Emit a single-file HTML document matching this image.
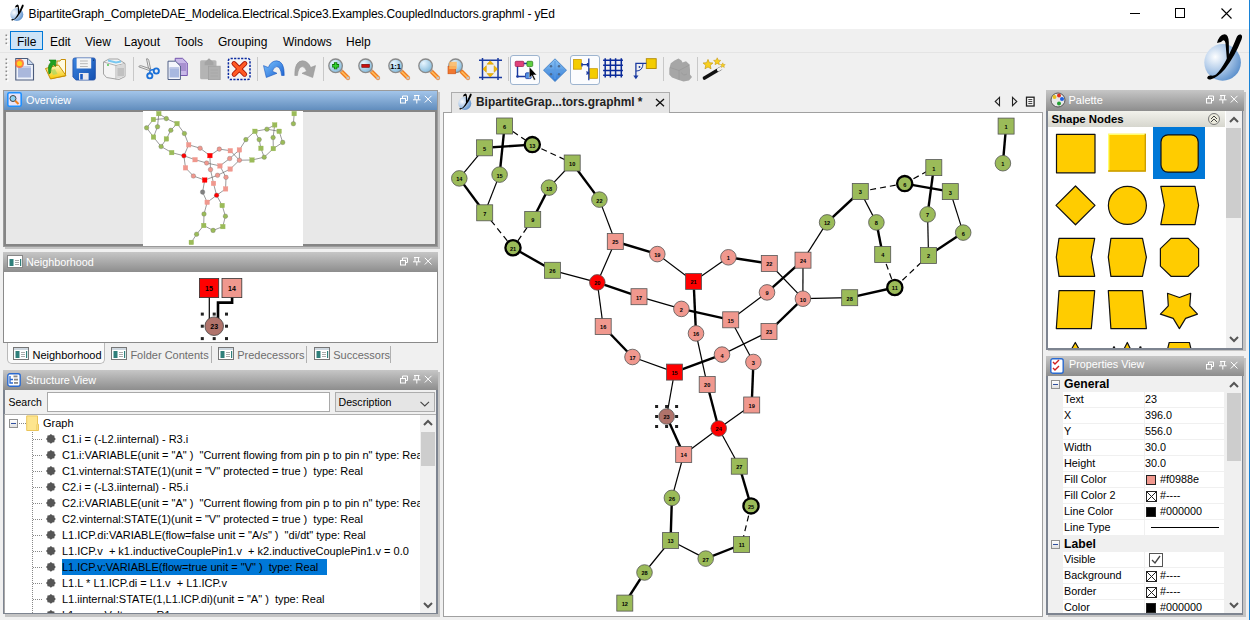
<!DOCTYPE html>
<html><head><meta charset="utf-8">
<style>
*{margin:0;padding:0;box-sizing:border-box}
html,body{width:1250px;height:620px;overflow:hidden;background:#f0f0f0;font-family:"Liberation Sans",sans-serif;font-size:12px;color:#000}
.a{position:absolute}
.t{position:absolute;white-space:nowrap;line-height:1}
.hdrA{background:linear-gradient(#a3c5ea,#618dbd)}
.hdrI{background:linear-gradient(#c6c6c6,#8d8d8d)}
.ptitle{color:#fff;font-size:10.8px}
.tab{font-size:11px}
.tree .t{font-size:11px}
.props .t{font-size:10.8px}
</style></head><body>
<svg class="a" width="0" height="0" style="left:0;top:0"><defs><radialGradient id="lg" cx="0.3" cy="0.35" r="0.8"><stop offset="0" stop-color="#fdfeff"/><stop offset="0.45" stop-color="#b4cdea"/><stop offset="1" stop-color="#5088c8"/></radialGradient></defs></svg>
<!-- title bar -->
<div class="a" style="left:0;top:0;width:1249px;height:29px;background:#fff"></div>
<div class="a" style="left:1249px;top:0;width:1px;height:620px;background:#1883d7"></div>
<svg class="a" style="left:6.5px;top:3.4px" width="18.8" height="21.3" viewBox="0 0 53 60">
<circle cx="27.6" cy="32.4" r="18.3" fill="url(#lg)"/>
<path d="M22 13 Q24 5 29.5 4.2 Q33.5 4.5 33.8 12 L34 30 L31 31 L30.5 13 Q29.5 8 26 12 Z" fill="#000"/>
<path d="M45.8 4.6 Q48 5.5 46.5 9.5 Q40 26 30 39 Q22 48 15.5 49.5 Q12 50 12.2 47.5 Q13 45 16 45.5 Q19 46 21 44.5 Q30 36 42 6.5 Q43.5 4 45.8 4.6 Z" fill="#000"/>
</svg>
<div class="t" style="left:28.6px;top:7.5px;font-size:12px;letter-spacing:-0.13px;color:#000">BipartiteGraph_CompleteDAE_Modelica.Electrical.Spice3.Examples.CoupledInductors.graphml - yEd</div>
<div class="a" style="left:1130px;top:13px;width:10px;height:1px;background:#000"></div>
<div class="a" style="left:1175px;top:8px;width:10px;height:10px;border:1px solid #000"></div>
<svg class="a" style="left:1221px;top:8px" width="11" height="11"><path d="M0.5 0.5L10.5 10.5M10.5 0.5L0.5 10.5" stroke="#000" stroke-width="1.1"/></svg>

<!-- menu bar -->
<svg class="a" style="left:5px;top:34px" width="4" height="12"><g fill="#fff"><rect x="1.5" y="1.5" width="2" height="2"/><rect x="1.5" y="5.5" width="2" height="2"/><rect x="1.5" y="9.5" width="2" height="2"/></g><g fill="#8a8a8a"><rect x="0.5" y="0.5" width="1.6" height="1.6"/><rect x="0.5" y="4.5" width="1.6" height="1.6"/><rect x="0.5" y="8.5" width="1.6" height="1.6"/></g></svg>
<div class="a" style="left:0;top:52px;width:1249px;height:1px;background:#e4e4e4"></div>
<div class="a" style="left:10px;top:31px;width:33px;height:19px;background:#cce4f7;border:1px solid #0078d7"></div>
<div class="t" style="left:17px;top:36px">File</div>
<div class="t" style="left:50px;top:36px">Edit</div>
<div class="t" style="left:85px;top:36px">View</div>
<div class="t" style="left:124px;top:36px">Layout</div>
<div class="t" style="left:175px;top:36px">Tools</div>
<div class="t" style="left:218px;top:36px">Grouping</div>
<div class="t" style="left:283px;top:36px">Windows</div>
<div class="t" style="left:346px;top:36px">Help</div>

<!-- toolbar -->
<svg class="a" style="left:5px;top:58px" width="4" height="24"><g fill="#fff"><rect x="1.5" y="1.5" width="2" height="2"/><rect x="1.5" y="5.5" width="2" height="2"/><rect x="1.5" y="9.5" width="2" height="2"/><rect x="1.5" y="13.5" width="2" height="2"/><rect x="1.5" y="17.5" width="2" height="2"/><rect x="1.5" y="21.5" width="2" height="2"/></g><g fill="#8a8a8a"><rect x="0.5" y="0.5" width="1.6" height="1.6"/><rect x="0.5" y="4.5" width="1.6" height="1.6"/><rect x="0.5" y="8.5" width="1.6" height="1.6"/><rect x="0.5" y="12.5" width="1.6" height="1.6"/><rect x="0.5" y="16.5" width="1.6" height="1.6"/><rect x="0.5" y="20.5" width="1.6" height="1.6"/></g></svg>
<svg class="a" style="left:12px;top:57px" width="26" height="26"><path d="M3.8 1.5H15.5L21.5 7.5V23H3.8Z" fill="#eef2fa" stroke="#4a5a7a" stroke-width="1.1"/><path d="M15.5 1.5V7.5H21.5" fill="#c8d8f0" stroke="#4a5a7a" stroke-width="0.8"/><rect x="6" y="9" width="13" height="11.5" fill="#aab8dc"/><rect x="6" y="9" width="13" height="2" fill="#c8d0e8"/><circle cx="7.5" cy="6.5" r="4.5" fill="#ff6a2a" opacity="0.85"/><circle cx="7.5" cy="6.5" r="2.6" fill="#ffd21a"/></svg>
<svg class="a" style="left:42px;top:57px" width="26" height="26"><defs><linearGradient id="fg" x1="0" y1="0" x2="0" y2="1"><stop offset="0" stop-color="#fff6c0"/><stop offset="1" stop-color="#f6c800"/></linearGradient></defs><path d="M15 4H18L19 2.5H23.5V19L9 21.5L7 8H15Z" fill="#fffbe0" stroke="#c8900a" stroke-width="1"/><path d="M3.5 11.5L16.5 8L24 18.5L8.5 22Z" fill="url(#fg)" stroke="#c8900a" stroke-width="1"/><path d="M9 13L13 12L15.5 17L11 18Z" fill="#a8d860" opacity="0.7"/><path d="M7 17Q5 9 9 5L7 3H14L13.5 9.5L11.5 7.5Q8.5 10 8.5 16Z" fill="#20a020" stroke="#108010" stroke-width="0.6"/></svg>
<svg class="a" style="left:72px;top:57px" width="26" height="26"><defs><linearGradient id="sg" x1="0" y1="0" x2="1" y2="1"><stop offset="0" stop-color="#3a84e0"/><stop offset="1" stop-color="#1450b0"/></linearGradient></defs><path d="M3 0.9H21.4Q23.4 0.9 23.4 3V21Q23.4 23.1 21.4 23.1H4L0.9 20V3Q0.9 0.9 3 0.9Z" fill="url(#sg)" stroke="#1a48a0" stroke-width="0.7"/><rect x="4.6" y="1.2" width="14.6" height="10.3" fill="#f4f4f4"/><path d="M8 4H15.8M8 6.7H15.8M8 9.5H15.8" stroke="#b8b8b8" stroke-width="1"/><rect x="7" y="16" width="9.6" height="6.8" fill="#e8e8ee"/><rect x="8.2" y="17" width="2.6" height="5.5" fill="#1a58c0"/><circle cx="21.5" cy="3.2" r="0.6" fill="#0a2a60"/></svg>
<svg class="a" style="left:102px;top:57px" width="26" height="26"><path d="M1.5 5L7 2H16L23 6.5V19.5L17 22.5L4.5 20.5L1.5 17Z" fill="#f4f4f4" stroke="#9a9a9a" stroke-width="0.9"/><path d="M1.5 5L14 8.5L23 6.5M14 8.5V22.5" stroke="#a8a8a8" fill="none" stroke-width="0.9"/><path d="M14.5 9L22.5 7V19.5L14.5 22Z" fill="#d8d8d8"/><path d="M15.5 12H22M15.5 14H22M15.5 16H22M15.5 18H22" stroke="#999" stroke-width="0.7"/><path d="M6 3.5L14 5.5L19 4.5" stroke="#7ac8f0" stroke-width="2" fill="none"/><circle cx="6" cy="8" r="0.9" fill="#40c040"/></svg>
<div class="a" style="left:133px;top:57px;width:1px;height:24px;background:#c8c8c8"></div>
<svg class="a" style="left:137px;top:57px" width="26" height="26"><path d="M9.5 1.8Q11.3 1.2 11.8 3.5L13.6 12L11.8 12.8Z" fill="#f4f4f4" stroke="#7a7a7a" stroke-width="0.8"/><path d="M1.8 9.8Q2 8.3 4.3 8.8L13 11.8L12.3 13.5Z" fill="#f4f4f4" stroke="#7a7a7a" stroke-width="0.8"/><circle cx="19.3" cy="14" r="2.6" fill="none" stroke="#1a70d8" stroke-width="1.9"/><circle cx="12.8" cy="18.8" r="2.6" fill="none" stroke="#1a70d8" stroke-width="1.9"/><path d="M13 13.2L17 12.6M13 13.2L12.8 16" stroke="#1a70d8" stroke-width="1.5"/></svg>
<svg class="a" style="left:167px;top:57px" width="26" height="26"><path d="M8.2 1.3H15.5L20.3 6V18.5H8.2Z" fill="#c8b8e8" stroke="#6a4aa8" stroke-width="0.9"/><rect x="10" y="6" width="9" height="8" fill="#a890d0"/><path d="M1 4.2H8.5L13.4 9V22.5H1Z" fill="#f4f6fc" stroke="#40507a" stroke-width="0.9"/><rect x="2.5" y="11" width="9.5" height="9.5" fill="#a8b8e0"/><rect x="2.5" y="10" width="9.5" height="1.8" fill="#c0cae8"/></svg>
<svg class="a" style="left:198px;top:57px" width="26" height="26"><rect x="2.1" y="3.2" width="16.4" height="19" rx="1.5" fill="#b4b4b4"/><path d="M6.7 8.2H15.4V5.2L11 1.2L6.7 5.2Z" fill="#a4a4a4"/><rect x="10.5" y="9.2" width="11.7" height="13.4" fill="#b0b0b0" stroke="#a0a0a0" stroke-width="0.8"/><path d="M12.5 13H20M12.5 16H20M12.5 19H20" stroke="#a8a8a8" stroke-width="0.7"/></svg>
<svg class="a" style="left:227px;top:57px" width="26" height="26"><rect x="1.4" y="1.4" width="21.6" height="21.2" rx="2.2" fill="#f4f4f4" stroke="#0a2aa0" stroke-width="1.5" stroke-dasharray="2.2,1.3"/><path d="M7 6.6L17.6 17.2M17.8 6.6L7.2 17.2" stroke="#a01000" stroke-width="5" stroke-linecap="round"/><path d="M7 6.6L17.6 17.2M17.8 6.6L7.2 17.2" stroke="#ff5a24" stroke-width="3.4" stroke-linecap="round"/></svg>
<div class="a" style="left:257px;top:57px;width:1px;height:24px;background:#c8c8c8"></div>
<svg class="a" style="left:262px;top:57px" width="26" height="26"><defs><linearGradient id="ug" x1="0" y1="0" x2="1" y2="1"><stop offset="0" stop-color="#7cc4ff"/><stop offset="1" stop-color="#1a60d0"/></linearGradient></defs><path d="M22.2 18.5Q22.5 4 14.5 3.8Q9 4 6.3 10.5L1.5 8.6L4.3 20.5L15 16.3L10.3 14.3Q12 9.6 14.8 9.6Q18.6 9.8 19.6 18.5Z" fill="url(#ug)" stroke="#1a58c0" stroke-width="0.6"/></svg>
<svg class="a" style="left:292px;top:57px" width="26" height="26"><g transform="translate(25,0) scale(-1,1)"><path d="M22.2 18.5Q22.5 4 14.5 3.8Q9 4 6.3 10.5L1.5 8.6L4.3 20.5L15 16.3L10.3 14.3Q12 9.6 14.8 9.6Q18.6 9.8 19.6 18.5Z" fill="#a4a4a4" stroke="#959595" stroke-width="0.6"/></g></svg>
<div class="a" style="left:323px;top:57px;width:1px;height:24px;background:#c8c8c8"></div>
<svg class="a" style="left:327px;top:57px" width="26" height="26"><defs><radialGradient id="mg339" cx="0.35" cy="0.3" r="0.8"><stop offset="0" stop-color="#e8f6ff"/><stop offset="1" stop-color="#7ab4d8"/></radialGradient></defs><path d="M14.5 14.5L21 21" stroke="#f07a20" stroke-width="4.2" stroke-linecap="round"/><path d="M15 15L20.5 20.5" stroke="#ffc060" stroke-width="1.6" stroke-linecap="round"/><circle cx="21" cy="21" r="1.6" fill="#c8c8c8"/><path d="M12.5 12.5L14.5 14.5" stroke="#b0b0b0" stroke-width="3.5"/><circle cx="8.6" cy="8.8" r="6.8" fill="url(#mg339)" stroke="#8a8a8a" stroke-width="1.3"/><path d="M8.6 5.3V12.3M5.1 8.8H12.1" stroke="#0a6a0a" stroke-width="3.4"/><path d="M8.6 5.8V11.8M5.6 8.8H11.6" stroke="#30d030" stroke-width="1.8"/></svg>
<svg class="a" style="left:357px;top:57px" width="26" height="26"><defs><radialGradient id="mg369" cx="0.35" cy="0.3" r="0.8"><stop offset="0" stop-color="#e8f6ff"/><stop offset="1" stop-color="#7ab4d8"/></radialGradient></defs><path d="M14.5 14.5L21 21" stroke="#f07a20" stroke-width="4.2" stroke-linecap="round"/><path d="M15 15L20.5 20.5" stroke="#ffc060" stroke-width="1.6" stroke-linecap="round"/><circle cx="21" cy="21" r="1.6" fill="#c8c8c8"/><path d="M12.5 12.5L14.5 14.5" stroke="#b0b0b0" stroke-width="3.5"/><circle cx="8.6" cy="8.8" r="6.8" fill="url(#mg369)" stroke="#8a8a8a" stroke-width="1.3"/><rect x="4.8" y="7.3" width="7.6" height="3" fill="#c81010" stroke="#700000" stroke-width="0.6"/></svg>
<svg class="a" style="left:387px;top:57px" width="26" height="26"><defs><radialGradient id="mg399" cx="0.35" cy="0.3" r="0.8"><stop offset="0" stop-color="#e8f6ff"/><stop offset="1" stop-color="#7ab4d8"/></radialGradient></defs><path d="M14.5 14.5L21 21" stroke="#f07a20" stroke-width="4.2" stroke-linecap="round"/><path d="M15 15L20.5 20.5" stroke="#ffc060" stroke-width="1.6" stroke-linecap="round"/><circle cx="21" cy="21" r="1.6" fill="#c8c8c8"/><path d="M12.5 12.5L14.5 14.5" stroke="#b0b0b0" stroke-width="3.5"/><circle cx="8.6" cy="8.8" r="6.8" fill="url(#mg399)" stroke="#8a8a8a" stroke-width="1.3"/><text x="8.6" y="11.6" font-size="7.5" font-weight="bold" text-anchor="middle" fill="#000" font-family="Liberation Sans">1:1</text></svg>
<svg class="a" style="left:417px;top:57px" width="26" height="26"><defs><radialGradient id="mg429" cx="0.35" cy="0.3" r="0.8"><stop offset="0" stop-color="#e8f6ff"/><stop offset="1" stop-color="#7ab4d8"/></radialGradient></defs><path d="M14.5 14.5L21 21" stroke="#f07a20" stroke-width="4.2" stroke-linecap="round"/><path d="M15 15L20.5 20.5" stroke="#ffc060" stroke-width="1.6" stroke-linecap="round"/><circle cx="21" cy="21" r="1.6" fill="#c8c8c8"/><path d="M12.5 12.5L14.5 14.5" stroke="#b0b0b0" stroke-width="3.5"/><circle cx="8.6" cy="8.8" r="6.8" fill="url(#mg429)" stroke="#8a8a8a" stroke-width="1.3"/></svg>
<svg class="a" style="left:447px;top:57px" width="26" height="26"><defs><radialGradient id="mg459" cx="0.35" cy="0.3" r="0.8"><stop offset="0" stop-color="#e8f6ff"/><stop offset="1" stop-color="#7ab4d8"/></radialGradient></defs><path d="M14.5 14.5L21 21" stroke="#f07a20" stroke-width="4.2" stroke-linecap="round"/><path d="M15 15L20.5 20.5" stroke="#ffc060" stroke-width="1.6" stroke-linecap="round"/><circle cx="21" cy="21" r="1.6" fill="#c8c8c8"/><circle cx="8.6" cy="8.8" r="6.8" fill="url(#mg459)" stroke="#8a8a8a" stroke-width="1.3"/><rect x="1" y="9.6" width="7.6" height="7.2" fill="#f07830" stroke="#d05010" stroke-width="0.6"/><rect x="2.2" y="4.8" width="7.6" height="7.2" fill="#ffb860" opacity="0.85"/></svg>
<svg class="a" style="left:478px;top:57px" width="26" height="26"><path d="M4.5 1V23M20 1V23M1 3.2H24M1 20.5H24" stroke="#1a3aa0" stroke-width="1.5"/><path d="M12.2 3.8L15.5 7.2H9Z M12.2 20L15.5 16.6H9Z M4.8 12L8.3 8.7V15.3Z M19.6 12L16.1 8.7V15.3Z" fill="#f4b800" stroke="#c89000" stroke-width="0.5"/></svg>
<div class="a" style="left:508px;top:57px;width:1px;height:24px;background:#c8c8c8"></div>
<div class="a" style="left:510px;top:55px;width:30px;height:30px;border:1px solid #9db4cf;border-radius:3px;background:#fbfcfe"></div>
<svg class="a" style="left:513px;top:57px" width="26" height="26"><path d="M4.5 9V19.5H12M10.5 6.5H14.5" stroke="#1a3aa0" stroke-width="1.4" fill="none"/><circle cx="4.5" cy="19.5" r="1.3" fill="#1a3aa0"/><rect x="2.2" y="4.3" width="8.6" height="5.2" rx="1" fill="#e0407a" stroke="#a02050" stroke-width="0.8"/><rect x="13.9" y="4.3" width="5.8" height="5.2" rx="1" fill="#60d040" stroke="#308020" stroke-width="0.8"/><rect x="12.5" y="15.8" width="5.7" height="5.8" rx="1" fill="#5090e0" stroke="#1a3aa0" stroke-width="0.8"/><path d="M16.3 9.8V21L18.8 18.6L21 23.2L22.6 22.4L20.4 17.9H23.8Z" fill="#000" stroke="#fff" stroke-width="0.5"/></svg>
<svg class="a" style="left:543px;top:58px" width="24" height="24"><defs><linearGradient id="dg" x1="0" y1="0" x2="0" y2="1"><stop offset="0" stop-color="#8cc4f4"/><stop offset="1" stop-color="#2f7ad8"/></linearGradient></defs><path d="M12 0.8L23.5 12.2L12 23.5L0.5 12.2Z" fill="url(#dg)" stroke="#3a78c0" stroke-width="0.8"/><path d="M12 3V21M3 12.2H21" stroke="#5a9ae0" stroke-width="1.2"/><g fill="#4a6a90"><circle cx="8" cy="8.2" r="1.2"/><circle cx="16" cy="8.2" r="1.2"/><circle cx="8" cy="16.2" r="1.2"/><circle cx="16" cy="16.2" r="1.2"/></g></svg>
<div class="a" style="left:570px;top:55px;width:30px;height:30px;border:1px solid #9db4cf;border-radius:3px;background:#fbfcfe"></div>
<svg class="a" style="left:573px;top:57px" width="26" height="26"><rect x="0.5" y="2.6" width="7.8" height="9.6" fill="#f4cc00" stroke="#c89800" stroke-width="0.8"/><rect x="16.4" y="11.7" width="8" height="9.6" fill="#f4cc00" stroke="#c89800" stroke-width="0.8"/><path d="M15.8 1.6V23.2M8.3 7.7H15M9 6V9.4M14.5 6V9.4M13.5 14.5L16.5 17.5M16.5 14.5L13.5 17.5" stroke="#1a3aa0" stroke-width="1.3"/></svg>
<svg class="a" style="left:601px;top:57px" width="26" height="26"><path d="M4.2 1.2V20.4M9.4 1.2V20.4M14.6 1.2V20.4M20.3 1.2V20.4M2.1 3.2H21.9M2.1 8.2H21.9M2.1 13.4H21.9M2.1 18.3H21.9" stroke="#0a2a9a" stroke-width="1.5"/></svg>
<svg class="a" style="left:633px;top:57px" width="26" height="26"><rect x="13.3" y="1.7" width="9.9" height="9.8" fill="#f4cc00" stroke="#b08800" stroke-width="0.9"/><path d="M13.3 6.4H2.9V21" stroke="#1a3aa0" stroke-width="1.3" fill="none"/><path d="M0.3 18.5L2.9 22.3L5.5 18.5Z" fill="#1a3aa0"/><path d="M2.9 14.1Q10 14 10 6.4" stroke="#1a3aa0" stroke-width="1" fill="none"/><circle cx="6.5" cy="10" r="0.9" fill="#1a3aa0"/></svg>
<div class="a" style="left:663px;top:57px;width:1px;height:24px;background:#c8c8c8"></div>
<svg class="a" style="left:667px;top:57px" width="26" height="26"><path d="M2.3 11.5L3.8 6.2L7.5 3.5L11.5 1.6L14.5 3.6L15.5 5.5L19 4.2L22.5 7.5L23 12.5V17.5L25 20L22 23.5L16.5 24.5L11 22.8L5 20.5L2.3 17.5Z" fill="#a6a6a6"/><path d="M3 10.5L12 13.5L22.5 8M12 13.5V22.5M14.5 15.5Q16 19.5 20 17" stroke="#999" stroke-width="0.8" fill="none"/></svg>
<div class="a" style="left:697px;top:57px;width:1px;height:24px;background:#c8c8c8"></div>
<svg class="a" style="left:702px;top:57px" width="26" height="26"><path d="M2.5 21L18.5 11.5" stroke="#111" stroke-width="3.6" stroke-linecap="round"/><path d="M16.5 12.7L20.5 10.3" stroke="#f0f0f0" stroke-width="3.2" stroke-linecap="round"/><polygon points="6.00,2.40 7.41,5.66 10.95,5.99 8.28,8.34 9.06,11.81 6.00,10.00 2.94,11.81 3.72,8.34 1.05,5.99 4.59,5.66" fill="#f8d020" stroke="#c09000" stroke-width="0.6"/><polygon points="15.20,0.80 16.26,3.14 18.81,3.43 16.91,5.16 17.43,7.67 15.20,6.40 12.97,7.67 13.49,5.16 11.59,3.43 14.14,3.14" fill="#f8d020" stroke="#c09000" stroke-width="0.5"/><polygon points="20.80,5.80 21.51,7.43 23.27,7.60 21.94,8.77 22.33,10.50 20.80,9.60 19.27,10.50 19.66,8.77 18.33,7.60 20.09,7.43" fill="#f8d020" stroke="#c09000" stroke-width="0.4"/></svg>

<!-- Overview panel -->
<div class="a" style="left:5px;top:92px;width:435px;height:156.5px;background:#c4c4c4"></div>
<div class="a" style="left:3px;top:90px;width:435px;height:156.5px;background:#858585;border:1px solid #9a9a9a"></div>
<div class="a hdrA" style="left:4px;top:91px;width:433px;height:19px"></div>
<div class="t ptitle" style="left:26px;top:95px">Overview</div>
<svg class="a" style="left:400px;top:95px" width="34" height="9">
<g stroke="#fff" stroke-width="1" fill="none">
<rect x="0.5" y="3.5" width="5" height="4.5"/><path d="M2.5 3.5V1H7.5V5.5H5.5"/>
<path d="M14 0.5H19.5M15 0.5V4.5M18.5 0.5V4.5M13 4.8H20.5M16.8 4.8V8.5"/>
<path d="M24.8 0.8L31.5 7.5M31.5 0.8L24.8 7.5"/>
</g></svg>
<div class="a" style="left:6px;top:112px;width:429px;height:132px;background:#e8e8e8"></div>
<div class="a" style="left:143px;top:111px;width:160px;height:135px;background:#fff;overflow:hidden">
<svg width="160" height="135"><line x1="15.8" y1="2.6" x2="23.3" y2="7.6" stroke="#555" stroke-width="0.6"/>
<line x1="15.8" y1="2.6" x2="14.5" y2="15.7" stroke="#555" stroke-width="0.6"/>
<line x1="10.4" y1="8.5" x2="23.3" y2="7.6" stroke="#555" stroke-width="0.6"/>
<line x1="23.3" y1="7.6" x2="34.1" y2="12.6" stroke="#555" stroke-width="0.6"/>
<line x1="10.4" y1="8.5" x2="3.6" y2="16.8" stroke="#555" stroke-width="0.6"/>
<line x1="3.6" y1="16.8" x2="10.5" y2="26.1" stroke="#555" stroke-width="0.6"/>
<line x1="14.5" y1="15.7" x2="10.5" y2="26.1" stroke="#555" stroke-width="0.6"/>
<line x1="34.1" y1="12.6" x2="27.8" y2="19.3" stroke="#555" stroke-width="0.6"/>
<line x1="34.1" y1="12.6" x2="41.4" y2="22.5" stroke="#555" stroke-width="0.6"/>
<line x1="27.8" y1="19.3" x2="23.4" y2="27.9" stroke="#555" stroke-width="0.6"/>
<line x1="10.5" y1="26.1" x2="18.1" y2="35.5" stroke="#555" stroke-width="0.6"/>
<line x1="23.4" y1="27.9" x2="18.1" y2="35.5" stroke="#555" stroke-width="0.6"/>
<line x1="18.1" y1="35.5" x2="28.7" y2="41.6" stroke="#555" stroke-width="0.6"/>
<line x1="28.7" y1="41.6" x2="40.9" y2="44.8" stroke="#555" stroke-width="0.6"/>
<line x1="41.4" y1="22.5" x2="45.7" y2="33.8" stroke="#555" stroke-width="0.6"/>
<line x1="45.7" y1="33.8" x2="40.9" y2="44.8" stroke="#555" stroke-width="0.6"/>
<line x1="45.7" y1="33.8" x2="57.1" y2="37.2" stroke="#555" stroke-width="0.6"/>
<line x1="57.1" y1="37.2" x2="66.9" y2="44.6" stroke="#555" stroke-width="0.6"/>
<line x1="66.9" y1="44.6" x2="76.3" y2="38.1" stroke="#555" stroke-width="0.6"/>
<line x1="76.3" y1="38.1" x2="87.3" y2="39.7" stroke="#555" stroke-width="0.6"/>
<line x1="40.9" y1="44.8" x2="52.1" y2="48.7" stroke="#555" stroke-width="0.6"/>
<line x1="40.9" y1="44.8" x2="42.5" y2="56.8" stroke="#555" stroke-width="0.6"/>
<line x1="52.1" y1="48.7" x2="63.6" y2="52.0" stroke="#555" stroke-width="0.6"/>
<line x1="63.6" y1="52.0" x2="76.9" y2="54.9" stroke="#555" stroke-width="0.6"/>
<line x1="66.9" y1="44.6" x2="67.5" y2="58.6" stroke="#555" stroke-width="0.6"/>
<line x1="76.9" y1="54.9" x2="86.7" y2="47.5" stroke="#555" stroke-width="0.6"/>
<line x1="86.7" y1="47.5" x2="96.4" y2="38.9" stroke="#555" stroke-width="0.6"/>
<line x1="87.3" y1="39.7" x2="96.4" y2="49.2" stroke="#555" stroke-width="0.6"/>
<line x1="96.4" y1="38.9" x2="96.4" y2="49.2" stroke="#555" stroke-width="0.6"/>
<line x1="96.4" y1="38.9" x2="102.9" y2="28.6" stroke="#555" stroke-width="0.6"/>
<line x1="96.4" y1="49.2" x2="87.2" y2="58.1" stroke="#555" stroke-width="0.6"/>
<line x1="87.2" y1="58.1" x2="74.5" y2="64.3" stroke="#555" stroke-width="0.6"/>
<line x1="76.9" y1="54.9" x2="83.0" y2="66.3" stroke="#555" stroke-width="0.6"/>
<line x1="42.5" y1="56.8" x2="50.4" y2="65.0" stroke="#555" stroke-width="0.6"/>
<line x1="50.4" y1="65.0" x2="61.7" y2="69.1" stroke="#555" stroke-width="0.6"/>
<line x1="61.7" y1="69.1" x2="74.5" y2="64.3" stroke="#555" stroke-width="0.6"/>
<line x1="67.5" y1="58.6" x2="70.5" y2="72.4" stroke="#555" stroke-width="0.6"/>
<line x1="83.0" y1="66.3" x2="82.6" y2="77.9" stroke="#555" stroke-width="0.6"/>
<line x1="61.7" y1="69.1" x2="59.6" y2="81.1" stroke="#555" stroke-width="0.6"/>
<line x1="70.5" y1="72.4" x2="73.6" y2="84.3" stroke="#555" stroke-width="0.6"/>
<line x1="82.6" y1="77.9" x2="73.6" y2="84.3" stroke="#555" stroke-width="0.6"/>
<line x1="59.6" y1="81.1" x2="64.2" y2="91.3" stroke="#555" stroke-width="0.6"/>
<line x1="73.6" y1="84.3" x2="64.2" y2="91.3" stroke="#555" stroke-width="0.6"/>
<line x1="73.6" y1="84.3" x2="79.2" y2="94.5" stroke="#555" stroke-width="0.6"/>
<line x1="96.4" y1="49.2" x2="109.0" y2="49.0" stroke="#555" stroke-width="0.6"/>
<line x1="79.2" y1="94.5" x2="82.4" y2="105.2" stroke="#555" stroke-width="0.6"/>
<line x1="82.4" y1="105.2" x2="79.8" y2="115.6" stroke="#555" stroke-width="0.6"/>
<line x1="79.8" y1="115.6" x2="70.1" y2="119.4" stroke="#555" stroke-width="0.6"/>
<line x1="70.1" y1="119.4" x2="60.7" y2="114.5" stroke="#555" stroke-width="0.6"/>
<line x1="60.7" y1="114.5" x2="61.0" y2="103.0" stroke="#555" stroke-width="0.6"/>
<line x1="61.0" y1="103.0" x2="64.2" y2="91.3" stroke="#555" stroke-width="0.6"/>
<line x1="60.7" y1="114.5" x2="53.6" y2="123.2" stroke="#555" stroke-width="0.6"/>
<line x1="53.6" y1="123.2" x2="48.3" y2="131.4" stroke="#555" stroke-width="0.6"/>
<line x1="102.9" y1="28.6" x2="111.9" y2="20.3" stroke="#555" stroke-width="0.6"/>
<line x1="111.9" y1="20.3" x2="123.9" y2="18.2" stroke="#555" stroke-width="0.6"/>
<line x1="123.9" y1="18.2" x2="131.7" y2="13.9" stroke="#555" stroke-width="0.6"/>
<line x1="123.9" y1="18.2" x2="136.2" y2="20.3" stroke="#555" stroke-width="0.6"/>
<line x1="131.7" y1="13.9" x2="130.1" y2="26.5" stroke="#555" stroke-width="0.6"/>
<line x1="111.9" y1="20.3" x2="116.2" y2="28.6" stroke="#555" stroke-width="0.6"/>
<line x1="116.2" y1="28.6" x2="117.9" y2="37.3" stroke="#555" stroke-width="0.6"/>
<line x1="130.1" y1="26.5" x2="130.3" y2="37.6" stroke="#555" stroke-width="0.6"/>
<line x1="136.2" y1="20.3" x2="139.7" y2="31.4" stroke="#555" stroke-width="0.6"/>
<line x1="139.7" y1="31.4" x2="130.3" y2="37.6" stroke="#555" stroke-width="0.6"/>
<line x1="117.9" y1="37.3" x2="121.2" y2="46.2" stroke="#555" stroke-width="0.6"/>
<line x1="130.3" y1="37.6" x2="121.2" y2="46.2" stroke="#555" stroke-width="0.6"/>
<line x1="121.2" y1="46.2" x2="109.0" y2="49.0" stroke="#555" stroke-width="0.6"/>
<line x1="151.2" y1="2.6" x2="150.4" y2="12.7" stroke="#555" stroke-width="0.6"/>
<rect x="13.5" y="0.3" width="4.6" height="4.6" fill="#9bbb59" stroke="#9bbb59" stroke-width="0.3"/>
<rect x="8.1" y="6.2" width="4.6" height="4.6" fill="#9bbb59" stroke="#9bbb59" stroke-width="0.3"/>
<circle cx="23.3" cy="7.6" r="2.3" fill="#9bbb59" stroke="#666" stroke-width="0.3"/>
<rect x="31.8" y="10.3" width="4.6" height="4.6" fill="#9bbb59" stroke="#9bbb59" stroke-width="0.3"/>
<circle cx="3.6" cy="16.8" r="2.3" fill="#9bbb59" stroke="#666" stroke-width="0.3"/>
<circle cx="14.5" cy="15.7" r="2.3" fill="#9bbb59" stroke="#666" stroke-width="0.3"/>
<circle cx="27.8" cy="19.3" r="2.3" fill="#9bbb59" stroke="#666" stroke-width="0.3"/>
<circle cx="41.4" cy="22.5" r="2.3" fill="#9bbb59" stroke="#666" stroke-width="0.3"/>
<rect x="8.2" y="23.8" width="4.6" height="4.6" fill="#9bbb59" stroke="#9bbb59" stroke-width="0.3"/>
<rect x="21.1" y="25.6" width="4.6" height="4.6" fill="#9bbb59" stroke="#9bbb59" stroke-width="0.3"/>
<circle cx="18.1" cy="35.5" r="2.3" fill="#9bbb59" stroke="#666" stroke-width="0.3"/>
<rect x="26.4" y="39.3" width="4.6" height="4.6" fill="#9bbb59" stroke="#9bbb59" stroke-width="0.3"/>
<rect x="43.4" y="31.5" width="4.6" height="4.6" fill="#f0988e" stroke="#f0988e" stroke-width="0.3"/>
<circle cx="40.9" cy="44.8" r="2.3" fill="#ff0000" stroke="#666" stroke-width="0.3"/>
<rect x="40.2" y="54.5" width="4.6" height="4.6" fill="#f0988e" stroke="#f0988e" stroke-width="0.3"/>
<circle cx="57.1" cy="37.2" r="2.3" fill="#f0988e" stroke="#666" stroke-width="0.3"/>
<circle cx="76.3" cy="38.1" r="2.3" fill="#f0988e" stroke="#666" stroke-width="0.3"/>
<rect x="85.0" y="37.4" width="4.6" height="4.6" fill="#f0988e" stroke="#f0988e" stroke-width="0.3"/>
<rect x="64.6" y="42.3" width="4.6" height="4.6" fill="#ff0000" stroke="#ff0000" stroke-width="0.3"/>
<rect x="49.8" y="46.4" width="4.6" height="4.6" fill="#f0988e" stroke="#f0988e" stroke-width="0.3"/>
<circle cx="63.6" cy="52.0" r="2.3" fill="#f0988e" stroke="#666" stroke-width="0.3"/>
<circle cx="86.7" cy="47.5" r="2.3" fill="#f0988e" stroke="#666" stroke-width="0.3"/>
<rect x="74.6" y="52.6" width="4.6" height="4.6" fill="#f0988e" stroke="#f0988e" stroke-width="0.3"/>
<circle cx="67.5" cy="58.6" r="2.3" fill="#f0988e" stroke="#666" stroke-width="0.3"/>
<rect x="84.9" y="55.8" width="4.6" height="4.6" fill="#f0988e" stroke="#f0988e" stroke-width="0.3"/>
<circle cx="74.5" cy="64.3" r="2.3" fill="#f0988e" stroke="#666" stroke-width="0.3"/>
<circle cx="50.4" cy="65.0" r="2.3" fill="#f0988e" stroke="#666" stroke-width="0.3"/>
<circle cx="83.0" cy="66.3" r="2.3" fill="#f0988e" stroke="#666" stroke-width="0.3"/>
<rect x="59.4" y="66.8" width="4.6" height="4.6" fill="#ff0000" stroke="#ff0000" stroke-width="0.3"/>
<rect x="68.2" y="70.1" width="4.6" height="4.6" fill="#f0988e" stroke="#f0988e" stroke-width="0.3"/>
<rect x="80.3" y="75.6" width="4.6" height="4.6" fill="#f0988e" stroke="#f0988e" stroke-width="0.3"/>
<circle cx="59.6" cy="81.1" r="2.3" fill="#808080" stroke="#666" stroke-width="0.3"/>
<circle cx="73.6" cy="84.3" r="2.3" fill="#ff0000" stroke="#666" stroke-width="0.3"/>
<rect x="61.9" y="89.0" width="4.6" height="4.6" fill="#f0988e" stroke="#f0988e" stroke-width="0.3"/>
<rect x="94.1" y="36.6" width="4.6" height="4.6" fill="#f0988e" stroke="#f0988e" stroke-width="0.3"/>
<circle cx="96.4" cy="49.2" r="2.3" fill="#f0988e" stroke="#666" stroke-width="0.3"/>
<rect x="76.9" y="92.2" width="4.6" height="4.6" fill="#9bbb59" stroke="#9bbb59" stroke-width="0.3"/>
<circle cx="61.0" cy="103.0" r="2.3" fill="#9bbb59" stroke="#666" stroke-width="0.3"/>
<circle cx="82.4" cy="105.2" r="2.3" fill="#9bbb59" stroke="#666" stroke-width="0.3"/>
<rect x="58.4" y="112.2" width="4.6" height="4.6" fill="#9bbb59" stroke="#9bbb59" stroke-width="0.3"/>
<rect x="77.5" y="113.3" width="4.6" height="4.6" fill="#9bbb59" stroke="#9bbb59" stroke-width="0.3"/>
<circle cx="70.1" cy="119.4" r="2.3" fill="#9bbb59" stroke="#666" stroke-width="0.3"/>
<circle cx="53.6" cy="123.2" r="2.3" fill="#9bbb59" stroke="#666" stroke-width="0.3"/>
<rect x="46.0" y="129.1" width="4.6" height="4.6" fill="#9bbb59" stroke="#9bbb59" stroke-width="0.3"/>
<rect x="109.6" y="18.0" width="4.6" height="4.6" fill="#9bbb59" stroke="#9bbb59" stroke-width="0.3"/>
<circle cx="123.9" cy="18.2" r="2.3" fill="#9bbb59" stroke="#666" stroke-width="0.3"/>
<rect x="129.4" y="11.6" width="4.6" height="4.6" fill="#9bbb59" stroke="#9bbb59" stroke-width="0.3"/>
<circle cx="102.9" cy="28.6" r="2.3" fill="#9bbb59" stroke="#666" stroke-width="0.3"/>
<circle cx="116.2" cy="28.6" r="2.3" fill="#9bbb59" stroke="#666" stroke-width="0.3"/>
<circle cx="130.1" cy="26.5" r="2.3" fill="#9bbb59" stroke="#666" stroke-width="0.3"/>
<rect x="115.6" y="35.0" width="4.6" height="4.6" fill="#9bbb59" stroke="#9bbb59" stroke-width="0.3"/>
<rect x="128.0" y="35.3" width="4.6" height="4.6" fill="#9bbb59" stroke="#9bbb59" stroke-width="0.3"/>
<rect x="133.9" y="18.0" width="4.6" height="4.6" fill="#9bbb59" stroke="#9bbb59" stroke-width="0.3"/>
<circle cx="139.7" cy="31.4" r="2.3" fill="#9bbb59" stroke="#666" stroke-width="0.3"/>
<circle cx="121.2" cy="46.2" r="2.3" fill="#9bbb59" stroke="#666" stroke-width="0.3"/>
<rect x="106.7" y="46.7" width="4.6" height="4.6" fill="#9bbb59" stroke="#9bbb59" stroke-width="0.3"/>
<rect x="148.9" y="0.3" width="4.6" height="4.6" fill="#9bbb59" stroke="#9bbb59" stroke-width="0.3"/>
<circle cx="150.4" cy="12.7" r="2.3" fill="#9bbb59" stroke="#666" stroke-width="0.3"/></svg>
</div>

<!-- Neighborhood panel -->
<div class="a" style="left:3px;top:252px;width:435px;height:91px;background:#8a8a8a"></div>
<div class="a hdrI" style="left:3px;top:252px;width:435px;height:20px"></div>
<div class="t ptitle" style="left:26px;top:257px">Neighborhood</div>
<svg class="a" style="left:400px;top:257px" width="34" height="9">
<g stroke="#fff" stroke-width="1" fill="none">
<rect x="0.5" y="3.5" width="5" height="4.5"/><path d="M2.5 3.5V1H7.5V5.5H5.5"/>
<path d="M14 0.5H19.5M15 0.5V4.5M18.5 0.5V4.5M13 4.8H20.5M16.8 4.8V8.5"/>
<path d="M24.8 0.8L31.5 7.5M31.5 0.8L24.8 7.5"/>
</g></svg>
<div class="a" style="left:4px;top:272px;width:433px;height:70px;background:#fff"></div>
<svg class="a" style="left:190px;top:270px" width="70" height="72">
 <line x1="19.3" y1="27" x2="19.3" y2="50" stroke="#000" stroke-width="1.2"/>
 <polyline points="42.1,27 42.1,32.6 28,32.6 28,50" fill="none" stroke="#000" stroke-width="2.6"/>
 <rect x="9.4" y="8.5" width="19.3" height="19.1" fill="#ff0000" stroke="#333" stroke-width="0.8"/>
 <rect x="32" y="8.5" width="19.8" height="19.1" fill="#f0988e" stroke="#333" stroke-width="0.8"/>
 <text x="19" y="21" font-size="7" font-weight="bold" text-anchor="middle">15</text>
 <text x="42" y="21" font-size="7" font-weight="bold" text-anchor="middle">14</text>
 <circle cx="24.2" cy="56.2" r="9.3" fill="#b0736b" stroke="#444" stroke-width="0.8"/>
 <text x="24.2" y="58.7" font-size="7" font-weight="bold" text-anchor="middle">23</text>
 <g fill="#222"><rect x="10.8" y="42.6" width="3" height="3"/><rect x="22.7" y="42.6" width="3" height="3"/><rect x="35" y="42.6" width="3" height="3"/>
 <rect x="10.8" y="54.7" width="3" height="3"/><rect x="35" y="54.7" width="3" height="3"/>
 <rect x="10.8" y="67.1" width="3" height="3"/><rect x="22.7" y="67.1" width="3" height="3"/><rect x="35" y="67.1" width="3" height="3"/></g>
</svg>
<!-- tabs -->
<div class="a" style="left:7px;top:343px;width:98px;height:21px;background:#fafafa;border:1px solid #b9b9b9;border-top:none;border-radius:0 0 5px 5px"></div>
<svg class="a" style="left:13px;top:347px" width="16" height="13">
<rect x="0.5" y="0.5" width="15" height="12" fill="#fff" stroke="#777"/>
<rect x="1" y="1" width="14" height="2" fill="#cfd8e0"/>
<rect x="2.5" y="4" width="4" height="7" fill="#2f7f7a"/>
<path d="M8 5.5H12M8 7.5H12M8 9.5H12" stroke="#aaa" stroke-width="1"/>
<rect x="13" y="4" width="1.2" height="7" fill="#2f7f7a"/>
</svg>
<div class="t tab" style="left:32.5px;top:349.8px">Neighborhood</div>
<svg class="a" style="left:111px;top:347px" width="16" height="13">
<rect x="0.5" y="0.5" width="15" height="12" fill="#fff" stroke="#777"/>
<rect x="1" y="1" width="14" height="2" fill="#cfd8e0"/>
<rect x="2.5" y="4" width="4" height="7" fill="#2f7f7a"/>
<path d="M8 5.5H12M8 7.5H12M8 9.5H12" stroke="#aaa" stroke-width="1"/>
<rect x="13" y="4" width="1.2" height="7" fill="#2f7f7a"/>
</svg>
<div class="t tab" style="left:130.4px;top:349.8px;color:#6d6d6d">Folder Contents</div>
<div class="a" style="left:211px;top:346px;width:1px;height:17px;background:#b0b0b0"></div>
<svg class="a" style="left:218px;top:347px" width="16" height="13">
<rect x="0.5" y="0.5" width="15" height="12" fill="#fff" stroke="#777"/>
<rect x="1" y="1" width="14" height="2" fill="#cfd8e0"/>
<rect x="2.5" y="4" width="4" height="7" fill="#2f7f7a"/>
<path d="M8 5.5H12M8 7.5H12M8 9.5H12" stroke="#aaa" stroke-width="1"/>
<rect x="13" y="4" width="1.2" height="7" fill="#2f7f7a"/>
</svg>
<div class="t tab" style="left:237.2px;top:349.8px;color:#6d6d6d">Predecessors</div>
<div class="a" style="left:306px;top:346px;width:1px;height:17px;background:#b0b0b0"></div>
<svg class="a" style="left:314px;top:347px" width="16" height="13">
<rect x="0.5" y="0.5" width="15" height="12" fill="#fff" stroke="#777"/>
<rect x="1" y="1" width="14" height="2" fill="#cfd8e0"/>
<rect x="2.5" y="4" width="4" height="7" fill="#2f7f7a"/>
<path d="M8 5.5H12M8 7.5H12M8 9.5H12" stroke="#aaa" stroke-width="1"/>
<rect x="13" y="4" width="1.2" height="7" fill="#2f7f7a"/>
</svg>
<div class="t tab" style="left:333.2px;top:349.8px;color:#6d6d6d">Successors</div>
<div class="a" style="left:390px;top:346px;width:1px;height:17px;background:#b0b0b0"></div>

<!-- Structure view -->
<div class="a" style="left:5px;top:372px;width:435px;height:244.5px;background:#c4c4c4"></div>
<div class="a" style="left:3px;top:370px;width:435px;height:244px;background:#7d8490"></div>
<div class="a hdrI" style="left:3px;top:370px;width:435px;height:20px"></div>
<div class="t ptitle" style="left:26px;top:375px">Structure View</div>
<svg class="a" style="left:400px;top:375px" width="34" height="9">
<g stroke="#fff" stroke-width="1" fill="none">
<rect x="0.5" y="3.5" width="5" height="4.5"/><path d="M2.5 3.5V1H7.5V5.5H5.5"/>
<path d="M14 0.5H19.5M15 0.5V4.5M18.5 0.5V4.5M13 4.8H20.5M16.8 4.8V8.5"/>
<path d="M24.8 0.8L31.5 7.5M31.5 0.8L24.8 7.5"/>
</g></svg>
<div class="a" style="left:4.5px;top:390px;width:431px;height:223px;background:#f0f0f0"></div>
<div class="t" style="left:8.5px;top:397px;font-size:10.5px">Search</div>
<div class="a" style="left:47px;top:392px;width:283px;height:20px;background:#fff;border:1px solid #a9a9a9"></div>
<div class="a" style="left:335px;top:392px;width:100px;height:20px;background:#e5e5e5;border:1px solid #adadad"></div>
<div class="t" style="left:338.5px;top:397px;font-size:10.6px">Description</div>
<svg class="a" style="left:420px;top:401px" width="10" height="6"><path d="M0.5 0.8L4.8 5L9 0.8" stroke="#444" fill="none" stroke-width="1.1"/></svg>
<div class="a" style="left:4px;top:414px;width:431.5px;height:199px;background:#fff;border-left:1px solid #a8a8a8;border-top:1px solid #b0b0b0"></div>
<div class="a tree" style="left:5px;top:415px;width:415px;height:198px;overflow:hidden">
<div class="a" style="left:4px;top:4px;width:9px;height:9px;border:1px solid #919191;background:linear-gradient(#fff,#e0e0e0)"></div>
<div class="a" style="left:6px;top:8px;width:5px;height:1px;background:#3050a0"></div>
<div class="a" style="left:14px;top:8px;width:8px;height:1px;background:repeating-linear-gradient(90deg,#888 0 1px,transparent 1px 2px)"></div>
<svg class="a" style="left:21px;top:0px" width="14" height="17"><path d="M0.7 0.9H11.5V9.3H12.5V15.5H0.7Z" fill="#fde58e" stroke="#eac55a" stroke-width="1"/><path d="M10.8 9.3V15.5" stroke="#eac55a" stroke-width="0.8"/></svg>
<div class="t" style="left:38px;top:3px">Graph</div>
<div class="a" style="left:27px;top:17px;width:1px;height:190px;background:repeating-linear-gradient(#888 0 1px,transparent 1px 2px)"></div>
<div class="a" style="left:28px;top:24px;width:9px;height:1px;background:repeating-linear-gradient(90deg,#888 0 1px,transparent 1px 2px)"></div>
<svg class="a" style="left:40.6px;top:19.4px" width="10" height="10"><polygon points="9.80,4.90 8.50,6.39 8.36,8.36 6.39,8.50 4.90,9.80 3.41,8.50 1.44,8.36 1.30,6.39 0.00,4.90 1.30,3.41 1.44,1.44 3.41,1.30 4.90,0.00 6.39,1.30 8.36,1.44 8.50,3.41" fill="#555"/></svg>
<div class="t" style="left:57px;top:19px">C1.i = (-L2.iinternal) - R3.i</div>
<div class="a" style="left:28px;top:40px;width:9px;height:1px;background:repeating-linear-gradient(90deg,#888 0 1px,transparent 1px 2px)"></div>
<svg class="a" style="left:40.6px;top:35.4px" width="10" height="10"><polygon points="9.80,4.90 8.50,6.39 8.36,8.36 6.39,8.50 4.90,9.80 3.41,8.50 1.44,8.36 1.30,6.39 0.00,4.90 1.30,3.41 1.44,1.44 3.41,1.30 4.90,0.00 6.39,1.30 8.36,1.44 8.50,3.41" fill="#555"/></svg>
<div class="t" style="left:57px;top:35px">C1.i:VARIABLE(unit = "A" )&nbsp; "Current flowing from pin p to pin n" type: Real</div>
<div class="a" style="left:28px;top:56px;width:9px;height:1px;background:repeating-linear-gradient(90deg,#888 0 1px,transparent 1px 2px)"></div>
<svg class="a" style="left:40.6px;top:51.4px" width="10" height="10"><polygon points="9.80,4.90 8.50,6.39 8.36,8.36 6.39,8.50 4.90,9.80 3.41,8.50 1.44,8.36 1.30,6.39 0.00,4.90 1.30,3.41 1.44,1.44 3.41,1.30 4.90,0.00 6.39,1.30 8.36,1.44 8.50,3.41" fill="#555"/></svg>
<div class="t" style="left:57px;top:51px">C1.vinternal:STATE(1)(unit = "V" protected = true )&nbsp; type: Real</div>
<div class="a" style="left:28px;top:72px;width:9px;height:1px;background:repeating-linear-gradient(90deg,#888 0 1px,transparent 1px 2px)"></div>
<svg class="a" style="left:40.6px;top:67.4px" width="10" height="10"><polygon points="9.80,4.90 8.50,6.39 8.36,8.36 6.39,8.50 4.90,9.80 3.41,8.50 1.44,8.36 1.30,6.39 0.00,4.90 1.30,3.41 1.44,1.44 3.41,1.30 4.90,0.00 6.39,1.30 8.36,1.44 8.50,3.41" fill="#555"/></svg>
<div class="t" style="left:57px;top:67px">C2.i = (-L3.iinternal) - R5.i</div>
<div class="a" style="left:28px;top:88px;width:9px;height:1px;background:repeating-linear-gradient(90deg,#888 0 1px,transparent 1px 2px)"></div>
<svg class="a" style="left:40.6px;top:83.4px" width="10" height="10"><polygon points="9.80,4.90 8.50,6.39 8.36,8.36 6.39,8.50 4.90,9.80 3.41,8.50 1.44,8.36 1.30,6.39 0.00,4.90 1.30,3.41 1.44,1.44 3.41,1.30 4.90,0.00 6.39,1.30 8.36,1.44 8.50,3.41" fill="#555"/></svg>
<div class="t" style="left:57px;top:83px">C2.i:VARIABLE(unit = "A" )&nbsp; "Current flowing from pin p to pin n" type: Real</div>
<div class="a" style="left:28px;top:104px;width:9px;height:1px;background:repeating-linear-gradient(90deg,#888 0 1px,transparent 1px 2px)"></div>
<svg class="a" style="left:40.6px;top:99.4px" width="10" height="10"><polygon points="9.80,4.90 8.50,6.39 8.36,8.36 6.39,8.50 4.90,9.80 3.41,8.50 1.44,8.36 1.30,6.39 0.00,4.90 1.30,3.41 1.44,1.44 3.41,1.30 4.90,0.00 6.39,1.30 8.36,1.44 8.50,3.41" fill="#555"/></svg>
<div class="t" style="left:57px;top:99px">C2.vinternal:STATE(1)(unit = "V" protected = true )&nbsp; type: Real</div>
<div class="a" style="left:28px;top:120px;width:9px;height:1px;background:repeating-linear-gradient(90deg,#888 0 1px,transparent 1px 2px)"></div>
<svg class="a" style="left:40.6px;top:115.4px" width="10" height="10"><polygon points="9.80,4.90 8.50,6.39 8.36,8.36 6.39,8.50 4.90,9.80 3.41,8.50 1.44,8.36 1.30,6.39 0.00,4.90 1.30,3.41 1.44,1.44 3.41,1.30 4.90,0.00 6.39,1.30 8.36,1.44 8.50,3.41" fill="#555"/></svg>
<div class="t" style="left:57px;top:115px">L1.ICP.di:VARIABLE(flow=false unit = "A/s" )&nbsp; "di/dt" type: Real</div>
<div class="a" style="left:28px;top:136px;width:9px;height:1px;background:repeating-linear-gradient(90deg,#888 0 1px,transparent 1px 2px)"></div>
<svg class="a" style="left:40.6px;top:131.4px" width="10" height="10"><polygon points="9.80,4.90 8.50,6.39 8.36,8.36 6.39,8.50 4.90,9.80 3.41,8.50 1.44,8.36 1.30,6.39 0.00,4.90 1.30,3.41 1.44,1.44 3.41,1.30 4.90,0.00 6.39,1.30 8.36,1.44 8.50,3.41" fill="#555"/></svg>
<div class="t" style="left:57px;top:131px">L1.ICP.v&nbsp; + k1.inductiveCouplePin1.v&nbsp; + k2.inductiveCouplePin1.v = 0.0</div>
<div class="a" style="left:28px;top:152px;width:9px;height:1px;background:repeating-linear-gradient(90deg,#888 0 1px,transparent 1px 2px)"></div>
<svg class="a" style="left:40.6px;top:147.4px" width="10" height="10"><polygon points="9.80,4.90 8.50,6.39 8.36,8.36 6.39,8.50 4.90,9.80 3.41,8.50 1.44,8.36 1.30,6.39 0.00,4.90 1.30,3.41 1.44,1.44 3.41,1.30 4.90,0.00 6.39,1.30 8.36,1.44 8.50,3.41" fill="#555"/></svg>
<div class="a" style="left:57px;top:144px;width:265px;height:16px;background:#0078d7"></div>
<div class="t" style="left:57px;top:147px">L1.ICP.v:VARIABLE(flow=true unit = "V" )&nbsp; type: Real</div>
<div class="a" style="left:28px;top:168px;width:9px;height:1px;background:repeating-linear-gradient(90deg,#888 0 1px,transparent 1px 2px)"></div>
<svg class="a" style="left:40.6px;top:163.4px" width="10" height="10"><polygon points="9.80,4.90 8.50,6.39 8.36,8.36 6.39,8.50 4.90,9.80 3.41,8.50 1.44,8.36 1.30,6.39 0.00,4.90 1.30,3.41 1.44,1.44 3.41,1.30 4.90,0.00 6.39,1.30 8.36,1.44 8.50,3.41" fill="#555"/></svg>
<div class="t" style="left:57px;top:163px">L1.L * L1.ICP.di = L1.v&nbsp; + L1.ICP.v</div>
<div class="a" style="left:28px;top:184px;width:9px;height:1px;background:repeating-linear-gradient(90deg,#888 0 1px,transparent 1px 2px)"></div>
<svg class="a" style="left:40.6px;top:179.4px" width="10" height="10"><polygon points="9.80,4.90 8.50,6.39 8.36,8.36 6.39,8.50 4.90,9.80 3.41,8.50 1.44,8.36 1.30,6.39 0.00,4.90 1.30,3.41 1.44,1.44 3.41,1.30 4.90,0.00 6.39,1.30 8.36,1.44 8.50,3.41" fill="#555"/></svg>
<div class="t" style="left:57px;top:179px">L1.iinternal:STATE(1,L1.ICP.di)(unit = "A" )&nbsp; type: Real</div>
<div class="a" style="left:28px;top:200px;width:9px;height:1px;background:repeating-linear-gradient(90deg,#888 0 1px,transparent 1px 2px)"></div>
<svg class="a" style="left:40.6px;top:195.4px" width="10" height="10"><polygon points="9.80,4.90 8.50,6.39 8.36,8.36 6.39,8.50 4.90,9.80 3.41,8.50 1.44,8.36 1.30,6.39 0.00,4.90 1.30,3.41 1.44,1.44 3.41,1.30 4.90,0.00 6.39,1.30 8.36,1.44 8.50,3.41" fill="#555"/></svg>
<div class="t" style="left:57px;top:195px">L1.v = ...Voltage ... R1</div>
</div>
<div class="a" style="left:420px;top:415px;width:15.5px;height:198px;background:#f0f0f0"></div>
<div class="a" style="left:421px;top:432px;width:14px;height:34px;background:#cdcdcd"></div>
<svg class="a" style="left:423px;top:419px" width="10" height="8"><path d="M1 6L5 2L9 6" stroke="#555" fill="none" stroke-width="2"/></svg>
<svg class="a" style="left:423px;top:601px" width="10" height="8"><path d="M1 2L5 6L9 2" stroke="#555" fill="none" stroke-width="2"/></svg>

<!-- canvas tab area -->
<div class="a" style="left:451px;top:92px;width:219px;height:21px;background:#e6e6e6;border:1px solid #acacac;border-bottom:none"></div>
<svg class="a" style="left:455.2px;top:92.2px" width="18.8" height="21.3" viewBox="0 0 53 60">
<circle cx="27.6" cy="32.4" r="18.3" fill="url(#lg)"/>
<path d="M22 13 Q24 5 29.5 4.2 Q33.5 4.5 33.8 12 L34 30 L31 31 L30.5 13 Q29.5 8 26 12 Z" fill="#000"/>
<path d="M45.8 4.6 Q48 5.5 46.5 9.5 Q40 26 30 39 Q22 48 15.5 49.5 Q12 50 12.2 47.5 Q13 45 16 45.5 Q19 46 21 44.5 Q30 36 42 6.5 Q43.5 4 45.8 4.6 Z" fill="#000"/>
</svg>
<div class="t" style="left:476px;top:96.7px;font-weight:bold;font-size:11.9px;color:#222">BipartiteGrap...tors.graphml *</div>
<svg class="a" style="left:655px;top:98px" width="10" height="10"><path d="M1 1L9 8.2M9 1L1 8.2" stroke="#111" stroke-width="1.3"/></svg>
<svg class="a" style="left:994px;top:96px" width="42" height="11">
 <path d="M5.5 1.3L1.2 5.5L5.5 9.7Z" fill="none" stroke="#222" stroke-width="1.1"/>
 <path d="M18.5 1.3L22.8 5.5L18.5 9.7Z" fill="none" stroke="#222" stroke-width="1.1"/>
 <rect x="32.5" y="1.2" width="7.6" height="8.8" fill="#fff" stroke="#222" stroke-width="1.3"/>
 <path d="M34.3 3.6H38.3M34.3 5.6H38.3M34.3 7.6H38.3" stroke="#222" stroke-width="0.9"/>
</svg>
<div class="a" style="left:443px;top:112px;width:600px;height:505px;background:#fff;border:1px solid #a0a0a0"></div>
<svg class="a" style="left:444px;top:113px" width="598" height="503"><line x1="60.6" y1="13.0" x2="88.3" y2="31.6" stroke="#000" stroke-width="1.2" stroke-dasharray="6,4"/>
<line x1="60.6" y1="13.0" x2="55.6" y2="61.6" stroke="#000" stroke-width="2.4"/>
<line x1="40.5" y1="34.8" x2="88.3" y2="31.6" stroke="#000" stroke-width="2.4"/>
<line x1="88.3" y1="31.6" x2="128.2" y2="50.0" stroke="#000" stroke-width="1.2" stroke-dasharray="6,4"/>
<line x1="40.5" y1="34.8" x2="15.3" y2="65.4" stroke="#000" stroke-width="1.2"/>
<line x1="15.3" y1="65.4" x2="40.7" y2="99.8" stroke="#000" stroke-width="2.4"/>
<line x1="55.6" y1="61.6" x2="40.7" y2="99.8" stroke="#000" stroke-width="1.2"/>
<line x1="128.2" y1="50.0" x2="105.0" y2="74.6" stroke="#000" stroke-width="1.2"/>
<line x1="128.2" y1="50.0" x2="155.4" y2="86.6" stroke="#000" stroke-width="2.4"/>
<line x1="105.0" y1="74.6" x2="88.7" y2="106.5" stroke="#000" stroke-width="2.4"/>
<line x1="40.7" y1="99.8" x2="69.0" y2="134.8" stroke="#000" stroke-width="1.2" stroke-dasharray="6,4"/>
<line x1="88.7" y1="106.5" x2="69.0" y2="134.8" stroke="#000" stroke-width="1.2" stroke-dasharray="6,4"/>
<line x1="69.0" y1="134.8" x2="108.4" y2="157.3" stroke="#000" stroke-width="2.4"/>
<line x1="108.4" y1="157.3" x2="153.3" y2="169.4" stroke="#000" stroke-width="1.2"/>
<line x1="155.4" y1="86.6" x2="171.3" y2="128.5" stroke="#000" stroke-width="1.2"/>
<line x1="171.3" y1="128.5" x2="153.3" y2="169.4" stroke="#000" stroke-width="1.2"/>
<line x1="171.3" y1="128.5" x2="213.3" y2="141.1" stroke="#000" stroke-width="2.4"/>
<line x1="213.3" y1="141.1" x2="249.6" y2="168.4" stroke="#000" stroke-width="1.2"/>
<line x1="249.6" y1="168.4" x2="284.4" y2="144.3" stroke="#000" stroke-width="1.2"/>
<line x1="284.4" y1="144.3" x2="325.3" y2="150.5" stroke="#000" stroke-width="2.4"/>
<line x1="153.3" y1="169.4" x2="195.0" y2="183.7" stroke="#000" stroke-width="2.4"/>
<line x1="153.3" y1="169.4" x2="159.2" y2="213.5" stroke="#000" stroke-width="1.2"/>
<line x1="195.0" y1="183.7" x2="237.4" y2="195.9" stroke="#000" stroke-width="1.2"/>
<line x1="237.4" y1="195.9" x2="286.7" y2="206.8" stroke="#000" stroke-width="2.4"/>
<line x1="249.6" y1="168.4" x2="252.0" y2="220.4" stroke="#000" stroke-width="2.4"/>
<line x1="286.7" y1="206.8" x2="323.0" y2="179.4" stroke="#000" stroke-width="1.2"/>
<line x1="323.0" y1="179.4" x2="359.0" y2="147.2" stroke="#000" stroke-width="2.4"/>
<line x1="325.3" y1="150.5" x2="358.9" y2="185.7" stroke="#000" stroke-width="1.2"/>
<line x1="359.0" y1="147.2" x2="358.9" y2="185.7" stroke="#000" stroke-width="1.2"/>
<line x1="359.0" y1="147.2" x2="383.1" y2="109.4" stroke="#000" stroke-width="1.2"/>
<line x1="358.9" y1="185.7" x2="325.0" y2="218.5" stroke="#000" stroke-width="2.4"/>
<line x1="325.0" y1="218.5" x2="278.0" y2="241.6" stroke="#000" stroke-width="1.2"/>
<line x1="286.7" y1="206.8" x2="309.4" y2="249.0" stroke="#000" stroke-width="1.2"/>
<line x1="159.2" y1="213.5" x2="188.5" y2="244.0" stroke="#000" stroke-width="2.4"/>
<line x1="188.5" y1="244.0" x2="230.5" y2="259.1" stroke="#000" stroke-width="1.2"/>
<line x1="230.5" y1="259.1" x2="278.0" y2="241.6" stroke="#000" stroke-width="2.4"/>
<line x1="252.0" y1="220.4" x2="263.2" y2="271.5" stroke="#000" stroke-width="1.2"/>
<line x1="309.4" y1="249.0" x2="307.7" y2="292.0" stroke="#000" stroke-width="2.4"/>
<line x1="230.5" y1="259.1" x2="222.6" y2="303.5" stroke="#000" stroke-width="1.2"/>
<line x1="263.2" y1="271.5" x2="274.7" y2="315.5" stroke="#000" stroke-width="2.4"/>
<line x1="307.7" y1="292.0" x2="274.7" y2="315.5" stroke="#000" stroke-width="1.2"/>
<line x1="222.6" y1="303.5" x2="239.7" y2="341.5" stroke="#000" stroke-width="2.4"/>
<line x1="274.7" y1="315.5" x2="239.7" y2="341.5" stroke="#000" stroke-width="1.2"/>
<line x1="274.7" y1="315.5" x2="295.3" y2="353.2" stroke="#000" stroke-width="1.2"/>
<line x1="358.9" y1="185.7" x2="405.7" y2="184.7" stroke="#000" stroke-width="1.2"/>
<line x1="295.3" y1="353.2" x2="307.0" y2="392.9" stroke="#000" stroke-width="2.4"/>
<line x1="307.0" y1="392.9" x2="297.6" y2="431.5" stroke="#000" stroke-width="1.2" stroke-dasharray="6,4"/>
<line x1="297.6" y1="431.5" x2="261.7" y2="445.6" stroke="#000" stroke-width="2.4"/>
<line x1="261.7" y1="445.6" x2="226.6" y2="427.5" stroke="#000" stroke-width="1.2"/>
<line x1="226.6" y1="427.5" x2="227.9" y2="384.9" stroke="#000" stroke-width="2.4"/>
<line x1="227.9" y1="384.9" x2="239.7" y2="341.5" stroke="#000" stroke-width="1.2"/>
<line x1="226.6" y1="427.5" x2="200.5" y2="459.5" stroke="#000" stroke-width="1.2"/>
<line x1="200.5" y1="459.5" x2="180.8" y2="490.1" stroke="#000" stroke-width="2.4"/>
<line x1="383.1" y1="109.4" x2="416.3" y2="78.5" stroke="#000" stroke-width="2.4"/>
<line x1="416.3" y1="78.5" x2="460.7" y2="70.6" stroke="#000" stroke-width="1.2" stroke-dasharray="6,4"/>
<line x1="460.7" y1="70.6" x2="489.8" y2="54.6" stroke="#000" stroke-width="1.2" stroke-dasharray="6,4"/>
<line x1="460.7" y1="70.6" x2="506.3" y2="78.6" stroke="#000" stroke-width="2.4"/>
<line x1="489.8" y1="54.6" x2="483.6" y2="101.4" stroke="#000" stroke-width="2.4"/>
<line x1="416.3" y1="78.5" x2="432.4" y2="109.4" stroke="#000" stroke-width="1.2"/>
<line x1="432.4" y1="109.4" x2="438.7" y2="141.5" stroke="#000" stroke-width="2.4"/>
<line x1="483.6" y1="101.4" x2="484.5" y2="142.5" stroke="#000" stroke-width="1.2"/>
<line x1="506.3" y1="78.6" x2="519.2" y2="119.6" stroke="#000" stroke-width="1.2"/>
<line x1="519.2" y1="119.6" x2="484.5" y2="142.5" stroke="#000" stroke-width="2.4"/>
<line x1="438.7" y1="141.5" x2="450.8" y2="174.5" stroke="#000" stroke-width="1.2" stroke-dasharray="6,4"/>
<line x1="484.5" y1="142.5" x2="450.8" y2="174.5" stroke="#000" stroke-width="1.2" stroke-dasharray="6,4"/>
<line x1="450.8" y1="174.5" x2="405.7" y2="184.7" stroke="#000" stroke-width="2.4"/>
<line x1="562.1" y1="13.1" x2="558.9" y2="50.2" stroke="#000" stroke-width="2.4"/>
<rect x="52.6" y="5.0" width="16" height="16" fill="#9bbb59" stroke="#555" stroke-width="0.8"/>
<text x="60.6" y="15.9" font-size="5.6" font-weight="bold" text-anchor="middle" fill="#000">6</text>
<rect x="32.5" y="26.8" width="16" height="16" fill="#9bbb59" stroke="#555" stroke-width="0.8"/>
<text x="40.5" y="37.7" font-size="5.6" font-weight="bold" text-anchor="middle" fill="#000">5</text>
<circle cx="88.3" cy="31.6" r="7.6" fill="#9bbb59" stroke="#000" stroke-width="2.3"/>
<text x="88.3" y="34.5" font-size="5.6" font-weight="bold" text-anchor="middle" fill="#000">13</text>
<rect x="120.2" y="42.0" width="16" height="16" fill="#9bbb59" stroke="#555" stroke-width="0.8"/>
<text x="128.2" y="52.9" font-size="5.6" font-weight="bold" text-anchor="middle" fill="#000">10</text>
<circle cx="15.3" cy="65.4" r="7.8" fill="#9bbb59" stroke="#555" stroke-width="0.8"/>
<text x="15.3" y="68.3" font-size="5.6" font-weight="bold" text-anchor="middle" fill="#000">14</text>
<circle cx="55.6" cy="61.6" r="7.8" fill="#9bbb59" stroke="#555" stroke-width="0.8"/>
<text x="55.6" y="64.5" font-size="5.6" font-weight="bold" text-anchor="middle" fill="#000">15</text>
<circle cx="105.0" cy="74.6" r="7.8" fill="#9bbb59" stroke="#555" stroke-width="0.8"/>
<text x="105.0" y="77.5" font-size="5.6" font-weight="bold" text-anchor="middle" fill="#000">18</text>
<circle cx="155.4" cy="86.6" r="7.8" fill="#9bbb59" stroke="#555" stroke-width="0.8"/>
<text x="155.4" y="89.5" font-size="5.6" font-weight="bold" text-anchor="middle" fill="#000">22</text>
<rect x="32.7" y="91.8" width="16" height="16" fill="#9bbb59" stroke="#555" stroke-width="0.8"/>
<text x="40.7" y="102.7" font-size="5.6" font-weight="bold" text-anchor="middle" fill="#000">7</text>
<rect x="80.7" y="98.5" width="16" height="16" fill="#9bbb59" stroke="#555" stroke-width="0.8"/>
<text x="88.7" y="109.4" font-size="5.6" font-weight="bold" text-anchor="middle" fill="#000">9</text>
<circle cx="69.0" cy="134.8" r="7.6" fill="#9bbb59" stroke="#000" stroke-width="2.3"/>
<text x="69.0" y="137.7" font-size="5.6" font-weight="bold" text-anchor="middle" fill="#000">21</text>
<rect x="100.4" y="149.3" width="16" height="16" fill="#9bbb59" stroke="#555" stroke-width="0.8"/>
<text x="108.4" y="160.2" font-size="5.6" font-weight="bold" text-anchor="middle" fill="#000">26</text>
<rect x="163.3" y="120.5" width="16" height="16" fill="#f0988e" stroke="#555" stroke-width="0.8"/>
<text x="171.3" y="131.4" font-size="5.6" font-weight="bold" text-anchor="middle" fill="#000">25</text>
<circle cx="153.3" cy="169.4" r="7.8" fill="#ff0000" stroke="#555" stroke-width="0.8"/>
<text x="153.3" y="172.3" font-size="5.6" font-weight="bold" text-anchor="middle" fill="#000">20</text>
<rect x="151.2" y="205.5" width="16" height="16" fill="#f0988e" stroke="#555" stroke-width="0.8"/>
<text x="159.2" y="216.4" font-size="5.6" font-weight="bold" text-anchor="middle" fill="#000">16</text>
<circle cx="213.3" cy="141.1" r="7.8" fill="#f0988e" stroke="#555" stroke-width="0.8"/>
<text x="213.3" y="144.0" font-size="5.6" font-weight="bold" text-anchor="middle" fill="#000">19</text>
<circle cx="284.4" cy="144.3" r="7.8" fill="#f0988e" stroke="#555" stroke-width="0.8"/>
<text x="284.4" y="147.2" font-size="5.6" font-weight="bold" text-anchor="middle" fill="#000">1</text>
<rect x="317.3" y="142.5" width="16" height="16" fill="#f0988e" stroke="#555" stroke-width="0.8"/>
<text x="325.3" y="153.4" font-size="5.6" font-weight="bold" text-anchor="middle" fill="#000">22</text>
<rect x="241.6" y="160.4" width="16" height="16" fill="#ff0000" stroke="#555" stroke-width="0.8"/>
<text x="249.6" y="171.3" font-size="5.6" font-weight="bold" text-anchor="middle" fill="#000">21</text>
<rect x="187.0" y="175.7" width="16" height="16" fill="#f0988e" stroke="#555" stroke-width="0.8"/>
<text x="195.0" y="186.6" font-size="5.6" font-weight="bold" text-anchor="middle" fill="#000">17</text>
<circle cx="237.4" cy="195.9" r="7.8" fill="#f0988e" stroke="#555" stroke-width="0.8"/>
<text x="237.4" y="198.8" font-size="5.6" font-weight="bold" text-anchor="middle" fill="#000">2</text>
<circle cx="323.0" cy="179.4" r="7.8" fill="#f0988e" stroke="#555" stroke-width="0.8"/>
<text x="323.0" y="182.3" font-size="5.6" font-weight="bold" text-anchor="middle" fill="#000">9</text>
<rect x="278.7" y="198.8" width="16" height="16" fill="#f0988e" stroke="#555" stroke-width="0.8"/>
<text x="286.7" y="209.7" font-size="5.6" font-weight="bold" text-anchor="middle" fill="#000">15</text>
<circle cx="252.0" cy="220.4" r="7.8" fill="#f0988e" stroke="#555" stroke-width="0.8"/>
<text x="252.0" y="223.3" font-size="5.6" font-weight="bold" text-anchor="middle" fill="#000">16</text>
<rect x="317.0" y="210.5" width="16" height="16" fill="#f0988e" stroke="#555" stroke-width="0.8"/>
<text x="325.0" y="221.4" font-size="5.6" font-weight="bold" text-anchor="middle" fill="#000">23</text>
<circle cx="278.0" cy="241.6" r="7.8" fill="#f0988e" stroke="#555" stroke-width="0.8"/>
<text x="278.0" y="244.5" font-size="5.6" font-weight="bold" text-anchor="middle" fill="#000">4</text>
<circle cx="188.5" cy="244.0" r="7.8" fill="#f0988e" stroke="#555" stroke-width="0.8"/>
<text x="188.5" y="246.9" font-size="5.6" font-weight="bold" text-anchor="middle" fill="#000">17</text>
<circle cx="309.4" cy="249.0" r="7.8" fill="#f0988e" stroke="#555" stroke-width="0.8"/>
<text x="309.4" y="251.9" font-size="5.6" font-weight="bold" text-anchor="middle" fill="#000">3</text>
<rect x="222.5" y="251.1" width="16" height="16" fill="#ff0000" stroke="#555" stroke-width="0.8"/>
<text x="230.5" y="262.0" font-size="5.6" font-weight="bold" text-anchor="middle" fill="#000">15</text>
<rect x="255.2" y="263.5" width="16" height="16" fill="#f0988e" stroke="#555" stroke-width="0.8"/>
<text x="263.2" y="274.4" font-size="5.6" font-weight="bold" text-anchor="middle" fill="#000">20</text>
<rect x="299.7" y="284.0" width="16" height="16" fill="#f0988e" stroke="#555" stroke-width="0.8"/>
<text x="307.7" y="294.9" font-size="5.6" font-weight="bold" text-anchor="middle" fill="#000">19</text>
<circle cx="222.6" cy="303.5" r="7.8" fill="#b0736b" stroke="#555" stroke-width="0.8"/>
<text x="222.6" y="306.4" font-size="5.6" font-weight="bold" text-anchor="middle" fill="#000">23</text>
<circle cx="274.7" cy="315.5" r="7.8" fill="#ff0000" stroke="#555" stroke-width="0.8"/>
<text x="274.7" y="318.4" font-size="5.6" font-weight="bold" text-anchor="middle" fill="#000">24</text>
<rect x="231.7" y="333.5" width="16" height="16" fill="#f0988e" stroke="#555" stroke-width="0.8"/>
<text x="239.7" y="344.4" font-size="5.6" font-weight="bold" text-anchor="middle" fill="#000">14</text>
<rect x="351.0" y="139.2" width="16" height="16" fill="#f0988e" stroke="#555" stroke-width="0.8"/>
<text x="359.0" y="150.1" font-size="5.6" font-weight="bold" text-anchor="middle" fill="#000">24</text>
<circle cx="358.9" cy="185.7" r="7.8" fill="#f0988e" stroke="#555" stroke-width="0.8"/>
<text x="358.9" y="188.6" font-size="5.6" font-weight="bold" text-anchor="middle" fill="#000">10</text>
<rect x="287.3" y="345.2" width="16" height="16" fill="#9bbb59" stroke="#555" stroke-width="0.8"/>
<text x="295.3" y="356.1" font-size="5.6" font-weight="bold" text-anchor="middle" fill="#000">27</text>
<circle cx="227.9" cy="384.9" r="7.8" fill="#9bbb59" stroke="#555" stroke-width="0.8"/>
<text x="227.9" y="387.8" font-size="5.6" font-weight="bold" text-anchor="middle" fill="#000">26</text>
<circle cx="307.0" cy="392.9" r="7.6" fill="#9bbb59" stroke="#000" stroke-width="2.3"/>
<text x="307.0" y="395.8" font-size="5.6" font-weight="bold" text-anchor="middle" fill="#000">25</text>
<rect x="218.6" y="419.5" width="16" height="16" fill="#9bbb59" stroke="#555" stroke-width="0.8"/>
<text x="226.6" y="430.4" font-size="5.6" font-weight="bold" text-anchor="middle" fill="#000">13</text>
<rect x="289.6" y="423.5" width="16" height="16" fill="#9bbb59" stroke="#555" stroke-width="0.8"/>
<text x="297.6" y="434.4" font-size="5.6" font-weight="bold" text-anchor="middle" fill="#000">11</text>
<circle cx="261.7" cy="445.6" r="7.8" fill="#9bbb59" stroke="#555" stroke-width="0.8"/>
<text x="261.7" y="448.5" font-size="5.6" font-weight="bold" text-anchor="middle" fill="#000">27</text>
<circle cx="200.5" cy="459.5" r="7.8" fill="#9bbb59" stroke="#555" stroke-width="0.8"/>
<text x="200.5" y="462.4" font-size="5.6" font-weight="bold" text-anchor="middle" fill="#000">28</text>
<rect x="172.8" y="482.1" width="16" height="16" fill="#9bbb59" stroke="#555" stroke-width="0.8"/>
<text x="180.8" y="493.0" font-size="5.6" font-weight="bold" text-anchor="middle" fill="#000">12</text>
<rect x="408.3" y="70.5" width="16" height="16" fill="#9bbb59" stroke="#555" stroke-width="0.8"/>
<text x="416.3" y="81.4" font-size="5.6" font-weight="bold" text-anchor="middle" fill="#000">3</text>
<circle cx="460.7" cy="70.6" r="7.6" fill="#9bbb59" stroke="#000" stroke-width="2.3"/>
<text x="460.7" y="73.5" font-size="5.6" font-weight="bold" text-anchor="middle" fill="#000">6</text>
<rect x="481.8" y="46.6" width="16" height="16" fill="#9bbb59" stroke="#555" stroke-width="0.8"/>
<text x="489.8" y="57.5" font-size="5.6" font-weight="bold" text-anchor="middle" fill="#000">1</text>
<circle cx="383.1" cy="109.4" r="7.8" fill="#9bbb59" stroke="#555" stroke-width="0.8"/>
<text x="383.1" y="112.3" font-size="5.6" font-weight="bold" text-anchor="middle" fill="#000">12</text>
<circle cx="432.4" cy="109.4" r="7.8" fill="#9bbb59" stroke="#555" stroke-width="0.8"/>
<text x="432.4" y="112.3" font-size="5.6" font-weight="bold" text-anchor="middle" fill="#000">8</text>
<circle cx="483.6" cy="101.4" r="7.8" fill="#9bbb59" stroke="#555" stroke-width="0.8"/>
<text x="483.6" y="104.3" font-size="5.6" font-weight="bold" text-anchor="middle" fill="#000">7</text>
<rect x="430.7" y="133.5" width="16" height="16" fill="#9bbb59" stroke="#555" stroke-width="0.8"/>
<text x="438.7" y="144.4" font-size="5.6" font-weight="bold" text-anchor="middle" fill="#000">4</text>
<rect x="476.5" y="134.5" width="16" height="16" fill="#9bbb59" stroke="#555" stroke-width="0.8"/>
<text x="484.5" y="145.4" font-size="5.6" font-weight="bold" text-anchor="middle" fill="#000">2</text>
<rect x="498.3" y="70.6" width="16" height="16" fill="#9bbb59" stroke="#555" stroke-width="0.8"/>
<text x="506.3" y="81.5" font-size="5.6" font-weight="bold" text-anchor="middle" fill="#000">3</text>
<circle cx="519.2" cy="119.6" r="7.8" fill="#9bbb59" stroke="#555" stroke-width="0.8"/>
<text x="519.2" y="122.5" font-size="5.6" font-weight="bold" text-anchor="middle" fill="#000">6</text>
<circle cx="450.8" cy="174.5" r="7.6" fill="#9bbb59" stroke="#000" stroke-width="2.3"/>
<text x="450.8" y="177.4" font-size="5.6" font-weight="bold" text-anchor="middle" fill="#000">11</text>
<rect x="397.7" y="176.7" width="16" height="16" fill="#9bbb59" stroke="#555" stroke-width="0.8"/>
<text x="405.7" y="187.6" font-size="5.6" font-weight="bold" text-anchor="middle" fill="#000">28</text>
<rect x="554.1" y="5.1" width="16" height="16" fill="#9bbb59" stroke="#555" stroke-width="0.8"/>
<text x="562.1" y="16.0" font-size="5.6" font-weight="bold" text-anchor="middle" fill="#000">1</text>
<circle cx="558.9" cy="50.2" r="7.8" fill="#9bbb59" stroke="#555" stroke-width="0.8"/>
<text x="558.9" y="53.1" font-size="5.6" font-weight="bold" text-anchor="middle" fill="#000">1</text>
<rect x="211.1" y="292.0" width="3" height="3" fill="#222"/>
<rect x="211.1" y="302.0" width="3" height="3" fill="#222"/>
<rect x="211.1" y="312.0" width="3" height="3" fill="#222"/>
<rect x="221.1" y="292.0" width="3" height="3" fill="#222"/>
<rect x="221.1" y="312.0" width="3" height="3" fill="#222"/>
<rect x="231.1" y="292.0" width="3" height="3" fill="#222"/>
<rect x="231.1" y="302.0" width="3" height="3" fill="#222"/>
<rect x="231.1" y="312.0" width="3" height="3" fill="#222"/></svg>
<div class="a" style="left:452px;top:112px;width:217px;height:1px;background:#e6e6e6"></div>

<!-- Palette -->
<div class="a" style="left:1048px;top:92px;width:198px;height:259px;background:#c4c4c4"></div>
<div class="a" style="left:1046px;top:90px;width:197px;height:260px;background:#7d8490"></div>
<div class="a hdrI" style="left:1046px;top:90px;width:198px;height:21px"></div>
<div class="t ptitle" style="left:1068.5px;top:95px;font-size:11px">Palette</div>
<svg class="a" style="left:1206px;top:95px" width="34" height="9">
<g stroke="#fff" stroke-width="1" fill="none">
<rect x="0.5" y="3.5" width="5" height="4.5"/><path d="M2.5 3.5V1H7.5V5.5H5.5"/>
<path d="M14 0.5H19.5M15 0.5V4.5M18.5 0.5V4.5M13 4.8H20.5M16.8 4.8V8.5"/>
<path d="M24.8 0.8L31.5 7.5M31.5 0.8L24.8 7.5"/>
</g></svg>
<div class="a" style="left:1048px;top:111px;width:194px;height:237px;background:#fff"></div>
<div class="a" style="left:1048px;top:111px;width:177px;height:16px;background:linear-gradient(#f2f2ec,#d6d6ce)"></div>
<div class="t" style="left:1051.5px;top:114px;font-weight:bold;font-size:11.4px">Shape Nodes</div>
<div class="a" style="left:1208px;top:113px;width:12px;height:12px;border-radius:50%;background:#ecebdd;border:1px solid #777"></div>
<svg class="a" style="left:1210px;top:115px" width="8" height="8"><path d="M1 4L4 1L7 4M1 7L4 4L7 7" stroke="#444" fill="none" stroke-width="1"/></svg>
<div class="a" style="left:1226px;top:111px;width:16px;height:237px;background:#f0f0f0"></div>
<div class="a" style="left:1226px;top:128px;width:15px;height:90px;background:#cdcdcd"></div>
<svg class="a" style="left:1229px;top:116px" width="10" height="8"><path d="M1 6L5 2L9 6" stroke="#555" fill="none" stroke-width="2"/></svg>
<svg class="a" style="left:1229px;top:335px" width="10" height="8"><path d="M1 2L5 6L9 2" stroke="#555" fill="none" stroke-width="2"/></svg>
<div class="a" style="left:1153px;top:127px;width:52px;height:52px;background:#0078d7"></div>
<svg class="a" style="left:1048px;top:127px" width="177" height="221">
<g fill="#ffcc00" stroke="#111" stroke-width="1.2" stroke-linejoin="round">
 <rect x="8.5" y="7.3" width="38.5" height="38.5"/>
 <rect x="113" y="7.9" width="37.2" height="37.2" rx="7"/>
 <path d="M27.5 59L47 78.4L27.5 97.8L8 78.4Z"/>
 <circle cx="79.4" cy="78.4" r="19"/>
 <path d="M112.8 59.3H147L150.6 78.4L147 97.6H112.8L116.4 78.4Z"/>
 <path d="M11 111.4H46.7L43.3 130.2L46.7 149.3H11L8.3 130.2Z"/>
 <path d="M62.9 111.4H94.5L98.4 130.2L94.5 149.3H62.9L60.3 130.2Z"/>
 <path d="M123 111.4H140.3L150.6 121.6V139.1L140.3 149.3H123L112.4 139.1V121.6Z"/>
 <path d="M11 163.7H46.7L43.3 201.6H8.3Z"/>
 <path d="M60.3 163.7H94.5L98.4 201.6H62.9Z"/>
 <path d="M119.5 166.3L131.4 170.5L142.7 166.3L141.8 178.8L149.5 187.1L137.6 191.4L131.4 201.6L125.2 191.4L112.4 187.1L120.3 178.8Z"/>
 <path d="M27.3 215.5L31 222H23.6Z"/>
 <path d="M79.3 215.5L82.5 222H76Z"/>
 <path d="M121.2 215.5H141.4L143 222H119.6Z"/>
</g>
<circle cx="66" cy="220.5" r="1.2" fill="#111"/><circle cx="92.4" cy="220.5" r="1.2" fill="#111"/>
<rect x="60.2" y="6.8" width="37.5" height="37.6" fill="#ffcc00"/>
<path d="M60.7 44.4V7.3H97.7" stroke="#ffff70" stroke-width="1.3" fill="none"/>
<path d="M60.2 44H97.3V6.8" stroke="#c89b00" stroke-width="1.3" fill="none"/>
</svg>

<!-- Properties -->
<div class="a" style="left:1048px;top:358px;width:198px;height:258.5px;background:#c4c4c4"></div>
<div class="a" style="left:1046px;top:356px;width:197px;height:258.5px;background:#7d8490"></div>
<div class="a hdrI" style="left:1046px;top:356px;width:198px;height:20px"></div>
<div class="t ptitle" style="left:1069px;top:359px">Properties View</div>
<svg class="a" style="left:1206px;top:361px" width="34" height="9">
<g stroke="#fff" stroke-width="1" fill="none">
<rect x="0.5" y="3.5" width="5" height="4.5"/><path d="M2.5 3.5V1H7.5V5.5H5.5"/>
<path d="M14 0.5H19.5M15 0.5V4.5M18.5 0.5V4.5M13 4.8H20.5M16.8 4.8V8.5"/>
<path d="M24.8 0.8L31.5 7.5M31.5 0.8L24.8 7.5"/>
</g></svg>
<div class="a" style="left:1048px;top:376px;width:194px;height:237px;background:#fff"></div>
<div class="a props" style="left:1048px;top:376px;width:178px;height:237px;overflow:hidden;background:#f0f0f0">
<div class="a" style="left:3px;top:4px;width:9px;height:9px;border:1px solid #919191;background:linear-gradient(#fff,#e0e0e0)"></div>
<div class="a" style="left:5px;top:8px;width:5px;height:1px;background:#3050a0"></div>
<div class="t" style="left:16px;top:2px;font-weight:bold;font-size:12.2px !important">General</div>
<div class="a" style="left:15px;top:16px;width:81px;height:15px;background:#fff"></div>
<div class="a" style="left:97px;top:16px;width:79px;height:15px;background:#fff"></div>
<div class="t" style="left:16px;top:18px">Text</div>
<div class="t" style="left:97px;top:18px">23</div>
<div class="a" style="left:15px;top:32px;width:81px;height:15px;background:#fff"></div>
<div class="a" style="left:97px;top:32px;width:79px;height:15px;background:#fff"></div>
<div class="t" style="left:16px;top:34px">X</div>
<div class="t" style="left:97px;top:34px">396.0</div>
<div class="a" style="left:15px;top:48px;width:81px;height:15px;background:#fff"></div>
<div class="a" style="left:97px;top:48px;width:79px;height:15px;background:#fff"></div>
<div class="t" style="left:16px;top:50px">Y</div>
<div class="t" style="left:97px;top:50px">556.0</div>
<div class="a" style="left:15px;top:64px;width:81px;height:15px;background:#fff"></div>
<div class="a" style="left:97px;top:64px;width:79px;height:15px;background:#fff"></div>
<div class="t" style="left:16px;top:66px">Width</div>
<div class="t" style="left:97px;top:66px">30.0</div>
<div class="a" style="left:15px;top:80px;width:81px;height:15px;background:#fff"></div>
<div class="a" style="left:97px;top:80px;width:79px;height:15px;background:#fff"></div>
<div class="t" style="left:16px;top:82px">Height</div>
<div class="t" style="left:97px;top:82px">30.0</div>
<div class="a" style="left:15px;top:96px;width:81px;height:15px;background:#fff"></div>
<div class="a" style="left:97px;top:96px;width:79px;height:15px;background:#fff"></div>
<div class="t" style="left:16px;top:98px">Fill Color</div>
<div class="a" style="left:98px;top:99px;width:10px;height:10px;background:#f0988e;border:1px solid #222"></div>
<div class="t" style="left:112px;top:98px">#f0988e</div>
<div class="a" style="left:15px;top:112px;width:81px;height:15px;background:#fff"></div>
<div class="a" style="left:97px;top:112px;width:79px;height:15px;background:#fff"></div>
<div class="t" style="left:16px;top:114px">Fill Color 2</div>
<svg class="a" style="left:98px;top:115px" width="11" height="11"><rect x="0.5" y="0.5" width="10" height="10" fill="#fff" stroke="#222"/><path d="M1 1L10 10M10 1L1 10" stroke="#222" stroke-width="1"/></svg>
<div class="t" style="left:112px;top:114px">#----</div>
<div class="a" style="left:15px;top:128px;width:81px;height:15px;background:#fff"></div>
<div class="a" style="left:97px;top:128px;width:79px;height:15px;background:#fff"></div>
<div class="t" style="left:16px;top:130px">Line Color</div>
<div class="a" style="left:98px;top:131px;width:10px;height:10px;background:#000;border:1px solid #222"></div>
<div class="t" style="left:112px;top:130px">#000000</div>
<div class="a" style="left:15px;top:144px;width:81px;height:15px;background:#fff"></div>
<div class="a" style="left:97px;top:144px;width:79px;height:15px;background:#fff"></div>
<div class="t" style="left:16px;top:146px">Line Type</div>
<div class="a" style="left:103px;top:151px;width:68px;height:1px;background:#000"></div>
<div class="a" style="left:3px;top:164px;width:9px;height:9px;border:1px solid #919191;background:linear-gradient(#fff,#e0e0e0)"></div>
<div class="a" style="left:5px;top:168px;width:5px;height:1px;background:#3050a0"></div>
<div class="t" style="left:16px;top:162px;font-weight:bold;font-size:12.2px !important">Label</div>
<div class="a" style="left:15px;top:176px;width:81px;height:15px;background:#fff"></div>
<div class="a" style="left:97px;top:176px;width:79px;height:15px;background:#fff"></div>
<div class="t" style="left:16px;top:178px">Visible</div>
<svg class="a" style="left:101px;top:177px" width="14" height="14"><rect x="0.5" y="0.5" width="13" height="13" fill="#fff" stroke="#555"/><path d="M3 7L6 10L11 3" stroke="#444" stroke-width="1.3" fill="none"/></svg>
<div class="a" style="left:15px;top:192px;width:81px;height:15px;background:#fff"></div>
<div class="a" style="left:97px;top:192px;width:79px;height:15px;background:#fff"></div>
<div class="t" style="left:16px;top:194px">Background</div>
<svg class="a" style="left:98px;top:195px" width="11" height="11"><rect x="0.5" y="0.5" width="10" height="10" fill="#fff" stroke="#222"/><path d="M1 1L10 10M10 1L1 10" stroke="#222" stroke-width="1"/></svg>
<div class="t" style="left:112px;top:194px">#----</div>
<div class="a" style="left:15px;top:208px;width:81px;height:15px;background:#fff"></div>
<div class="a" style="left:97px;top:208px;width:79px;height:15px;background:#fff"></div>
<div class="t" style="left:16px;top:210px">Border</div>
<svg class="a" style="left:98px;top:211px" width="11" height="11"><rect x="0.5" y="0.5" width="10" height="10" fill="#fff" stroke="#222"/><path d="M1 1L10 10M10 1L1 10" stroke="#222" stroke-width="1"/></svg>
<div class="t" style="left:112px;top:210px">#----</div>
<div class="a" style="left:15px;top:224px;width:81px;height:15px;background:#fff"></div>
<div class="a" style="left:97px;top:224px;width:79px;height:15px;background:#fff"></div>
<div class="t" style="left:16px;top:226px">Color</div>
<div class="a" style="left:98px;top:227px;width:10px;height:10px;background:#000;border:1px solid #222"></div>
<div class="t" style="left:112px;top:226px">#000000</div>
</div>
<div class="a" style="left:1226px;top:376px;width:16px;height:237px;background:#f0f0f0"></div>
<div class="a" style="left:1227px;top:393px;width:14px;height:68px;background:#cdcdcd"></div>
<svg class="a" style="left:1229px;top:381px" width="10" height="8"><path d="M1 6L5 2L9 6" stroke="#555" fill="none" stroke-width="2"/></svg>
<svg class="a" style="left:1229px;top:600.5px" width="10" height="8"><path d="M1 2L5 6L9 2" stroke="#555" fill="none" stroke-width="2"/></svg>

<svg class="a" style="left:7px;top:92px" width="15" height="15">
<rect x="0.8" y="0.8" width="13.4" height="13.4" rx="1.5" fill="#e8e4f8" stroke="#1e90ff" stroke-width="1.6"/>
<circle cx="6" cy="6.5" r="3" fill="#8fd0f0" stroke="#444" stroke-width="1"/>
<path d="M8.2 8.7L11.5 12" stroke="#f08020" stroke-width="2"/>
</svg>
<svg class="a" style="left:7px;top:255px" width="16" height="13">
<rect x="0.5" y="0.5" width="15" height="12" fill="#fff" stroke="#888"/>
<rect x="2.5" y="4" width="4" height="7" fill="#2f7f7a"/>
<path d="M8 5.5H12M8 7.5H12M8 9.5H12" stroke="#aaa" stroke-width="1"/>
<rect x="13" y="4" width="1.2" height="7" fill="#2f7f7a"/>
</svg>
<svg class="a" style="left:7px;top:373px" width="14" height="14">
<rect x="0.8" y="0.8" width="12.4" height="12.4" rx="2" fill="#fff" stroke="#2a6ad0" stroke-width="1.4"/>
<path d="M3 3V10H6M3 6.5H6" stroke="#2a6ad0" stroke-width="1.3" fill="none"/>
<rect x="6.5" y="2.5" width="4" height="1.8" fill="#888"/><rect x="7" y="5.7" width="4" height="1.8" fill="#888"/><rect x="7" y="9" width="4" height="1.8" fill="#888"/>
</svg>
<svg class="a" style="left:1050px;top:92px" width="16" height="16">
<circle cx="8" cy="8" r="7" fill="#e8e8e8" stroke="#555" stroke-width="1"/>
<circle cx="4.5" cy="5" r="2" fill="#e8c020"/><circle cx="9" cy="3.5" r="2" fill="#e03020"/><circle cx="12" cy="7" r="2" fill="#2060e0"/><circle cx="9" cy="11.5" r="2" fill="#20a030"/>
</svg>
<svg class="a" style="left:1050px;top:358px" width="14" height="16">
<rect x="0.8" y="0.8" width="12.4" height="14.4" rx="2" fill="#fff" stroke="#2a6ad0" stroke-width="1.4"/>
<path d="M3 4L5 6L9 2M3 10L5 12L9 8" stroke="#d02020" stroke-width="1.4" fill="none"/>
</svg>
<!-- yEd logo -->
<svg class="a" style="left:1195px;top:30px" width="53" height="60" viewBox="0 0 53 60">
<circle cx="27.6" cy="32.4" r="18.3" fill="url(#lg)"/>
<path d="M22 13 Q24 5 29.5 4.2 Q33.5 4.5 33.8 12 L34 30 L32 31 L30.5 13 Q29.5 8 26 12 Z" fill="#000"/>
<path d="M45.8 4.6 Q48 5.5 46.5 9.5 Q40 26 30 39 Q22 48 15.5 49.5 Q12 50 12.2 47.5 Q13 45 16 45.5 Q19 46 21 44.5 Q30 36 42 6.5 Q43.5 4 45.8 4.6 Z" fill="#000"/>
</svg>
</body></html>
